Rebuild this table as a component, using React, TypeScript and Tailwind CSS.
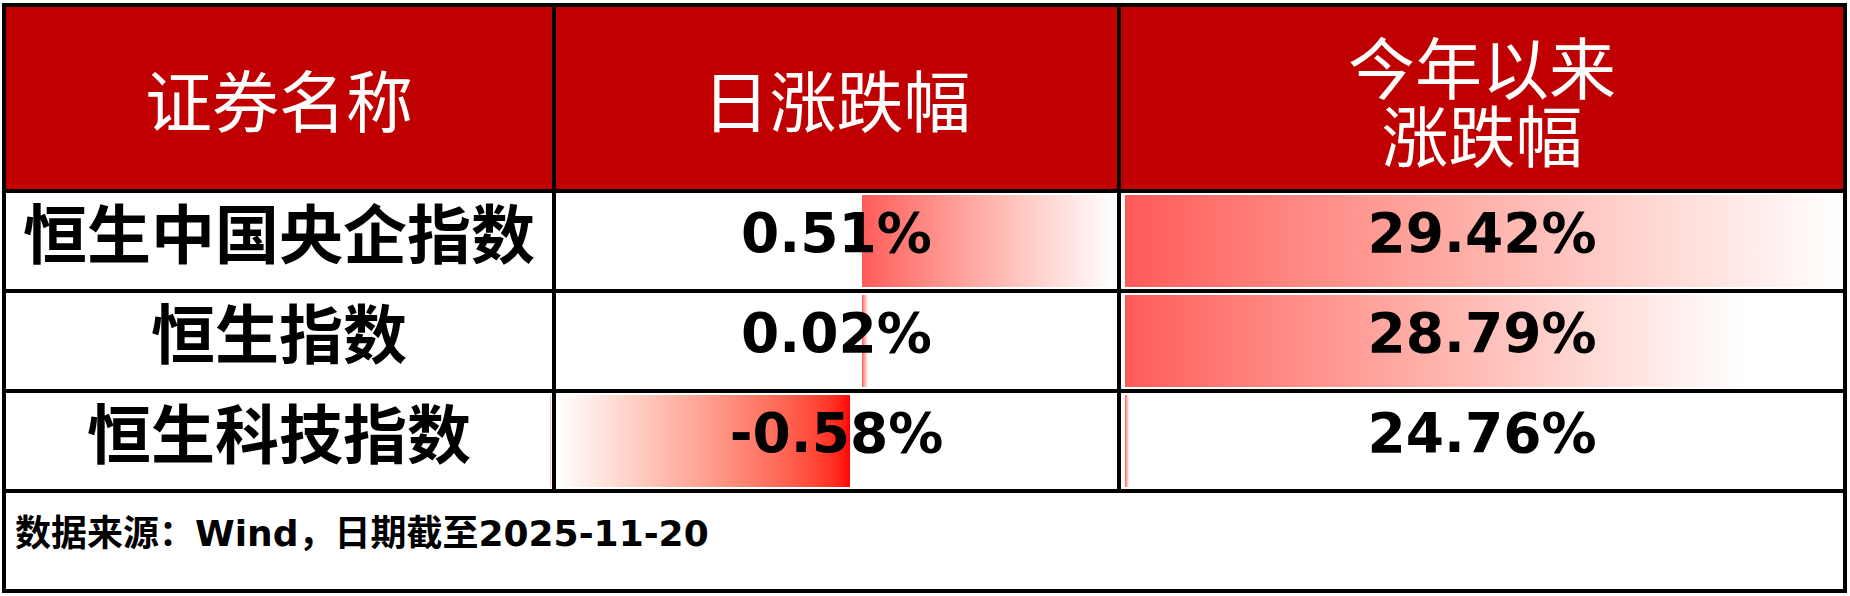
const names = ["恒生中国央企指数", "恒生指数", "恒生科技指数"]

// daily change: axis sits at 306px inside the cell, bars are px wide
const daily = [
  { text: "0.51%", neg: false, width: 253 },
  { text: "0.02%", neg: false, width: 6 },
  { text: "-0.58%", neg: true, width: 293 },
]

const ytd = [
  { text: "29.42%", width: 718 },
  { text: "28.79%", width: 621 },
  { text: "24.76%", width: 4 },
]

const cjk = "font-['Noto_Sans_CJK_SC',sans-serif]"
const num = "font-['DejaVu_Sans','Noto_Sans_CJK_SC',sans-serif]"

export default function App() {
  return (
    <div className="bg-white w-[1850px] h-[596px] pt-[3px] pl-[2px]">
      <div className="grid w-[1845px] h-[590px] bg-black p-[4px] gap-[4px] grid-cols-[546px_561px_722px] grid-rows-[182px_96px_96px_96px_96px]">
        {/* header */}
        <div className={`bg-[#c00000] text-white flex items-center justify-center text-[67px] leading-[68px] ${cjk}`}>
          证券名称
        </div>
        <div className={`bg-[#c00000] text-white flex items-center justify-center text-[67px] leading-[68px] ${cjk}`}>
          日涨跌幅
        </div>
        <div className={`bg-[#c00000] text-white flex flex-col items-center justify-center pt-[2px] text-[67px] leading-[68px] ${cjk}`}>
          <span>今年以来</span>
          <span>涨跌幅</span>
        </div>

        {names.map((name, i) => (
          <Row key={name} name={name} idx={i} />
        ))}

        {/* footer */}
        <div className={`col-span-3 bg-white flex items-center pl-[9px] pb-[14px] text-[36px] font-bold text-black ${num}`}>
          数据来源：Wind，日期截至2025-11-20
        </div>
      </div>
    </div>
  )
}

function Row({ name, idx }: { name: string; idx: number }) {
  const d = daily[idx]
  const y = ytd[idx]
  return (
    <>
      <div className={`relative bg-white flex items-center justify-center pb-[22px] text-[64px] leading-[70px] font-bold text-black ${cjk}`}>
        {name}
        {idx === 2 && <div className="absolute right-[1px] top-[2px] bottom-[2px] w-[1px] bg-[#f6c4c4]" />}
      </div>
      <div className="relative bg-white flex items-center justify-center pb-[15px]">
        {d.neg ? (
          <div
            className="absolute top-[2px] bottom-[2px] bg-gradient-to-r from-white to-[#ff0000]"
            style={{ left: 306 - d.width - 12, width: d.width }}
          />
        ) : (
          <div
            className="absolute top-[2px] bottom-[2px] left-[306px] bg-gradient-to-r from-[#ff5a5a] to-white"
            style={{ width: d.width }}
          />
        )}
        <span className={`relative text-[55px] font-bold text-black ${num}`}>{d.text}</span>
      </div>
      <div className="relative bg-white flex items-center justify-center pb-[15px]">
        <div
          className="absolute top-[2px] bottom-[2px] left-[4px] bg-gradient-to-r from-[#ff5a5a] to-white"
          style={{ width: y.width }}
        />
        <span className={`relative text-[55px] font-bold text-black ${num}`}>{y.text}</span>
      </div>
    </>
  )
}
